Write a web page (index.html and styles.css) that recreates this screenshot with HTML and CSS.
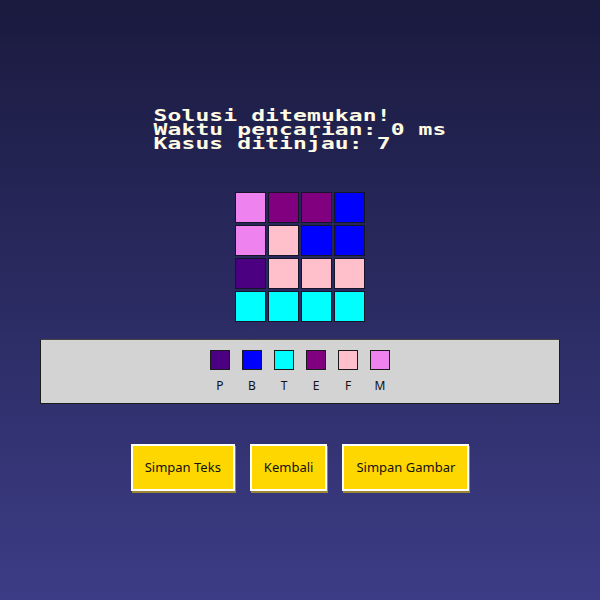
FILE: index.html
```html
<!DOCTYPE html>
<html>
<head>
<meta charset="utf-8">
<link rel="stylesheet" href="styles.css">
</head>
<body>
<main class="page">
  <div class="result">
    <div class="line">Solusi ditemukan!</div>
    <div class="line">Waktu pencarian: 0 ms</div>
    <div class="line">Kasus ditinjau: 7</div>
  </div>
  <div class="board">
    <div class="cell c-m"></div><div class="cell c-e"></div><div class="cell c-e"></div><div class="cell c-b"></div>
    <div class="cell c-m"></div><div class="cell c-f"></div><div class="cell c-b"></div><div class="cell c-b"></div>
    <div class="cell c-p"></div><div class="cell c-f"></div><div class="cell c-f"></div><div class="cell c-f"></div>
    <div class="cell c-t"></div><div class="cell c-t"></div><div class="cell c-t"></div><div class="cell c-t"></div>
  </div>
  <div class="legend">
    <div class="legend-item"><div class="swatch c-p"></div><span>P</span></div>
    <div class="legend-item"><div class="swatch c-b"></div><span>B</span></div>
    <div class="legend-item"><div class="swatch c-t"></div><span>T</span></div>
    <div class="legend-item"><div class="swatch c-e"></div><span>E</span></div>
    <div class="legend-item"><div class="swatch c-f"></div><span>F</span></div>
    <div class="legend-item"><div class="swatch c-m"></div><span>M</span></div>
  </div>
  <div class="actions">
    <button class="btn">Simpan Teks</button>
    <button class="btn">Kembali</button>
    <button class="btn">Simpan Gambar</button>
  </div>
</main>
</body>
</html>
```
FILE: styles.css
```css
html, body {
  margin: 0;
  padding: 0;
}
body {
  width: 600px;
  height: 600px;
  background: linear-gradient(to bottom, #1a1a3f 0%, #3c3c86 100%);
  overflow: hidden;
}
.page {
  display: flex;
  flex-direction: column;
  align-items: center;
  padding-top: 109px;
}
.result {
  font-family: "DejaVu Sans Mono", monospace;
  font-weight: bold;
  font-size: 23px;
  line-height: 21px;
  letter-spacing: 0.1px;
  color: #fffbe4;
  transform: scaleY(0.667);
  transform-origin: top center;
}
.line {
  white-space: nowrap;
}
.board {
  margin-top: 20px;
  display: grid;
  grid-template-columns: repeat(4, 31px);
  grid-auto-rows: 31px;
  gap: 2px;
}
.cell {
  box-sizing: border-box;
  border: 1px solid #15152a;
}
.c-p { background: #4b0082; }
.c-b { background: #0000ff; }
.c-t { background: #00ffff; }
.c-e { background: #800080; }
.c-f { background: #ffc0cb; }
.c-m { background: #ee82ee; }
.legend {
  margin-top: 17px;
  box-sizing: border-box;
  width: 520px;
  background: #d3d3d3;
  border: 1px solid #1c1c1c;
  border-top-color: #444;
  padding: 10px 0 10px;
  display: flex;
  justify-content: center;
  gap: 12px;
}
.legend-item {
  display: flex;
  flex-direction: column;
  align-items: center;
  width: 20px;
}
.swatch {
  box-sizing: border-box;
  width: 20px;
  height: 20px;
  border: 1px solid #1a1a1a;
}
.legend-item span {
  margin-top: 8px;
  font-family: "Noto Sans", sans-serif;
  font-size: 12px;
  line-height: 15px;
  color: #111;
}
.actions {
  margin-top: 40px;
  display: flex;
  gap: 15px;
}
.btn {
  font-family: "Noto Sans", sans-serif;
  font-size: 13px;
  line-height: 17px;
  color: #111;
  background: #ffd700;
  border: 2px solid #ffffff;
  padding: 13px 12px;
  margin: 0;
  box-shadow: 1px 2px 0 rgba(200, 170, 20, 0.7);
  cursor: pointer;
}
```
